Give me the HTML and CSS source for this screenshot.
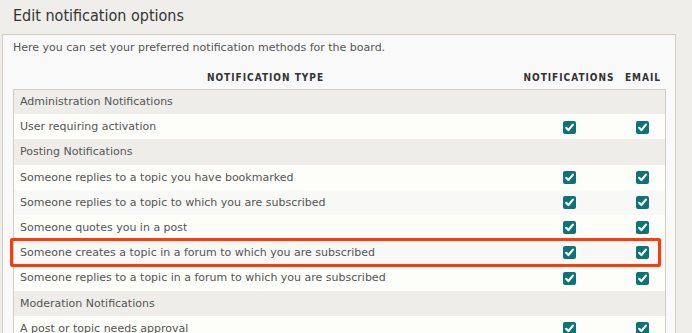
FILE: index.html
```html
<!DOCTYPE html>
<html lang="en">
<head>
  <meta charset="UTF-8">
  <title>Edit notification options</title>
  <link rel="stylesheet" href="styles.css">
</head>
<body>

  <h2 class="titulo">Edit notification options</h2>

  <div class="painel">
    <p class="intro">Here you can set your preferred notification methods for the board.</p>

    <table class="notificacoes">
      <thead>
        <tr>
          <th class="col-tipo">Notification type</th>
          <th class="col-notif">Notifications</th>
          <th class="col-email">Email</th>
        </tr>
      </thead>
      <tbody id="linhas"></tbody>
    </table>
  </div>

  <div class="destaque"></div>

  <script>
    // Grupos de notificação
    const grupos = [
      { nome: "Administration Notifications", itens: ["User requiring activation"] },
      { nome: "Posting Notifications", itens: [
        "Someone replies to a topic you have bookmarked",
        "Someone replies to a topic to which you are subscribed",
        "Someone quotes you in a post",
        "Someone creates a topic in a forum to which you are subscribed",
        "Someone replies to a topic in a forum to which you are subscribed"
      ] },
      { nome: "Moderation Notifications", itens: ["A post or topic needs approval"] }
    ];

    const check = `<span class="check"><svg width="13" height="13" viewBox="0 0 13 13"><path d="M3.2 6.8 L5.4 9.1 L9.9 3.6" fill="none" stroke="#fff" stroke-width="2.2" stroke-linecap="round" stroke-linejoin="round"/></svg></span>`;

    let html = "";
    grupos.forEach(grupo => {
      html += `<tr class="grupo"><td colspan="3">${grupo.nome}</td></tr>`;
      grupo.itens.forEach((item, i) => {
        html += `
          <tr class="${i % 2 ? "alt" : ""}">
            <td>${item}</td>
            <td class="col-check">${check}</td>
            <td class="col-check">${check}</td>
          </tr>
        `;
      });
    });
    document.getElementById("linhas").innerHTML = html;
  </script>

</body>
</html>
```

FILE: styles.css
```css
* {
  box-sizing: border-box;
  margin: 0;
  padding: 0;
}

body {
  background-color: #efeeea;
  font-family: "DejaVu Sans", sans-serif;
  font-size: 11px;
  color: #555;
  overflow: hidden;
}

.titulo {
  font-family: "DejaVu Sans Condensed", "DejaVu Sans", sans-serif;
  font-size: 16px;
  font-weight: normal;
  color: #333;
  height: 34px;
  line-height: 32px;
  padding-left: 13px;
}

.painel {
  margin-left: 2px;
  width: 674px;
  background-color: #f9f9f9;
  border: 1px solid #d3cdc4;
  border-bottom: none;
  padding: 6px 10px 0 10px;
  height: 320px;
}

.intro {
  line-height: 14px;
  color: #555;
}

.notificacoes {
  width: 652px;
  table-layout: fixed;
  border-collapse: collapse;
  margin-top: 11px;
}

.notificacoes th {
  font-family: "DejaVu Sans Condensed", "DejaVu Sans", sans-serif;
  font-weight: bold;
  font-size: 10px;
  color: #333;
  text-transform: uppercase;
  letter-spacing: 1px;
  height: 23px;
  text-align: center;
  white-space: nowrap;
}

.notificacoes .col-tipo {
  width: 504px;
}

.notificacoes .col-notif {
  width: 103px;
}

.notificacoes .col-email {
  width: 45px;
}

.notificacoes tbody {
  border: 1px solid #d3cdc4;
}

.notificacoes td {
  height: 25.2px;
  padding-left: 6px;
  background-color: #fdfdf9;
  white-space: nowrap;
}

.notificacoes tr.alt td {
  background-color: #f8f8f6;
}

.notificacoes tr.grupo td {
  background-color: #eeede9;
}

.notificacoes td.col-check {
  padding: 0;
  text-align: center;
}

.check {
  display: inline-block;
  width: 13px;
  height: 13px;
  border-radius: 2px;
  background-color: #0e7377;
  vertical-align: middle;
}

.check svg {
  display: block;
}

.destaque {
  position: absolute;
  left: 10px;
  top: 238px;
  width: 651px;
  height: 29px;
  border: 3px solid #fb3d0b;
  border-radius: 2px;
}
```
